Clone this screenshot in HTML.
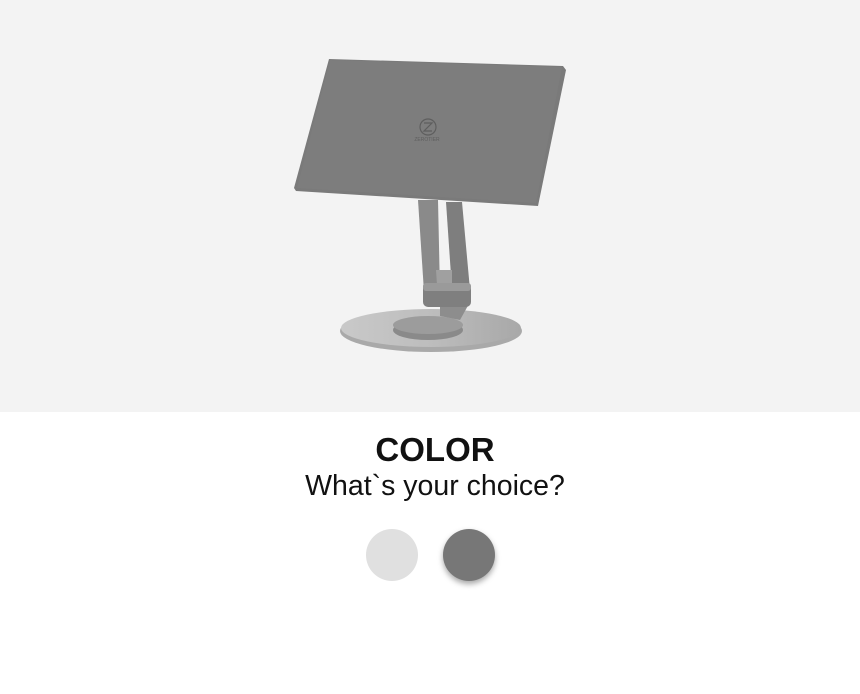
<!DOCTYPE html>
<html><head><style>
body{margin:0;width:860px;height:694px;background:#fff;font-family:"Liberation Sans",sans-serif;overflow:hidden;position:relative}
.top{position:absolute;left:0;top:0;width:860px;height:412px;background:#f3f3f3}
h1{position:absolute;left:0;width:870px;text-align:center;top:431px;margin:0;font-size:33px;font-weight:bold;color:#111}
p{position:absolute;left:0;width:870px;text-align:center;top:470px;margin:0;font-size:28.5px;color:#111}
.c{position:absolute;top:529px;width:52px;height:52px;border-radius:50%}
</style></head><body>
<div class="top">
<svg width="860" height="412">
<defs><linearGradient id="b" x1="0" x2="1"><stop offset="0" stop-color="#c9c9c9"/><stop offset="0.5" stop-color="#bdbdbd"/><stop offset="1" stop-color="#a8a8a8"/></linearGradient></defs>
<ellipse cx="431" cy="331" rx="91" ry="21" fill="#a9a9a9"/>
<ellipse cx="431" cy="328" rx="90" ry="19" fill="url(#b)"/>
<ellipse cx="428" cy="330" rx="35" ry="10" fill="#8a8a8a"/>
<ellipse cx="428" cy="325" rx="35" ry="9" fill="#9c9c9c"/>
<polygon points="440,300 470,302 460,320 440,316" fill="#8d8d8d"/>
<polygon points="418,200 438,200 440,292 424,292" fill="#8a8a8a"/>
<polygon points="446,202 462,202 470,290 452,290" fill="#7e7e7e"/>
<polygon points="436,270 452,270 452,285 437,285" fill="#a0a0a0"/>
<rect x="423" y="283" width="48" height="24" rx="5" fill="#7f7f7f"/>
<rect x="423" y="283" width="48" height="8" rx="3" fill="#9a9a9a"/>
<polygon points="329,59 563,66 566,70 538,206 296,191 294,188" fill="#7a7a7a"/>
<polygon points="330,60 562,67 536,203 297,188" fill="#7d7d7d"/>
<circle cx="428" cy="127" r="8" fill="none" stroke="#5e5e5e" stroke-width="1.2"/>
<path d="M424 123h8l-8 8h8" fill="none" stroke="#5e5e5e" stroke-width="1.2"/>
<text x="427" y="141" font-size="5" fill="#5e5e5e" text-anchor="middle">ZEROTIER</text>
</svg>
</div>
<h1>COLOR</h1>
<p>What`s your choice?</p>
<div class="c" style="left:366px;background:#e0e0e0"></div>
<div class="c" style="left:443px;background:#777;box-shadow:0 3px 6px rgba(0,0,0,.35)"></div>
</body></html>
